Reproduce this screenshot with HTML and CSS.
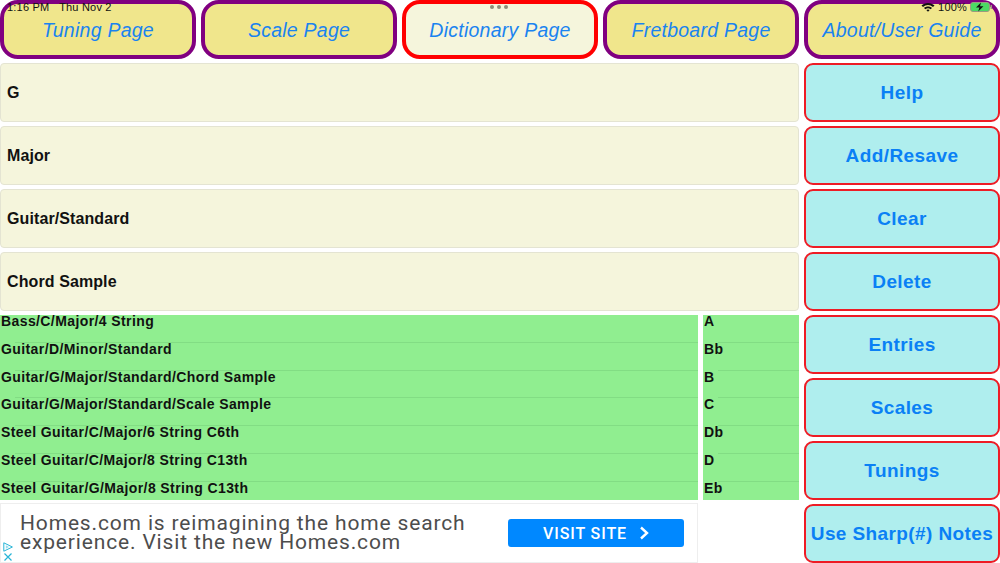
FILE: index.html

```html
<!DOCTYPE html>
<html lang="en">
<head>
    <meta charset="UTF-8">
    <meta name="viewport" content="width=device-width, initial-scale=1.0">
    <title>Dictionary Page</title>
    <link rel="stylesheet" href="styles.css">
</head>
<body>

<div class="page">
    <button class="tab">Tuning Page</button>
    <button class="tab">Scale Page</button>
    <button class="tab tab-active">Dictionary Page</button>
    <button class="tab">Fretboard Page</button>
    <button class="tab">About/User Guide</button>

    <div class="field">G</div>
    <button class="action">Help</button>
    <div class="field">Major</div>
    <button class="action">Add/Resave</button>
    <div class="field">Guitar/Standard</div>
    <button class="action">Clear</button>
    <div class="field">Chord Sample</div>
    <button class="action">Delete</button>

    <div class="lists">
        <ul class="list">
            <li>Bass/C/Major/4 String</li>
            <li>Guitar/D/Minor/Standard</li>
            <li>Guitar/G/Major/Standard/Chord Sample</li>
            <li>Guitar/G/Major/Standard/Scale Sample</li>
            <li>Steel Guitar/C/Major/6 String C6th</li>
            <li>Steel Guitar/C/Major/8 String C13th</li>
            <li>Steel Guitar/G/Major/8 String C13th</li>
        </ul>
        <ul class="list">
            <li>A</li>
            <li>Bb</li>
            <li>B</li>
            <li>C</li>
            <li>Db</li>
            <li>D</li>
            <li>Eb</li>
        </ul>
    </div>
    <button class="action">Entries</button>
    <button class="action">Scales</button>
    <button class="action">Tunings</button>

    <div class="ad">
        <p class="ad-text">Homes.com is reimagining the home search experience. Visit the new Homes.com</p>
        <a class="ad-button">VISIT SITE
            <svg class="ad-chevron" viewBox="0 0 10 14" width="10" height="14"><path d="M2 1.5 L8 7 L2 12.5" fill="none" stroke="#fff" stroke-width="2.4"/></svg>
        </a>
        <div class="ad-marks">
            <svg viewBox="0 0 10 10" width="10" height="10"><path d="M0.8 0.8 L9.4 5 L0.8 9.2 Z" fill="none" stroke="#27b4d6" stroke-width="1"/><path d="M2.8 3.2 L6 5 L2.8 6.8 Z" fill="#9adcec"/></svg>
            <svg viewBox="0 0 10 10" width="10" height="10"><path d="M1.5 1.5 L8.5 8.5 M8.5 1.5 L1.5 8.5" fill="none" stroke="#27b4d6" stroke-width="1.2"/></svg>
        </div>
    </div>
    <button class="action action-last">Use Sharp(#) Notes</button>
</div>

<div class="status">
    <span class="status-time">1:16 PM&nbsp;&nbsp;&nbsp;Thu Nov 2</span>
    <div class="status-dots"><i></i><i></i><i></i></div>
    <div class="status-right">
        <svg viewBox="0 0 14 10" width="14" height="10"><path d="M0.5 3.5 C4 0 10 0 13.5 3.5 L12 5 C9 2.3 5 2.3 2 5 Z M3 6 C5.2 4 8.8 4 11 6 L9.6 7.3 C8 6 6 6 4.4 7.3 Z M5.3 8.1 C6.2 7.4 7.8 7.4 8.7 8.1 L7 9.8 Z" fill="#111"/></svg>
        <span>100%</span>
        <svg viewBox="0 0 23 10" width="23" height="10"><rect x="0.5" y="0.5" width="19" height="9" rx="2.5" fill="#4cd964" stroke="#9a9a80"/><rect x="20.5" y="3" width="1.5" height="4" fill="#9a9a80"/><path d="M11 0.5 L6 5.6 L9.4 5.6 L8.2 9.5 L13.4 4.2 L10 4.2 Z" fill="#111"/></svg>
    </div>
</div>

</body>
</html>
```

FILE: styles.css

```css
* {
    box-sizing: border-box;
}
body {
    margin: 0;
    width: 1000px;
    height: 563px;
    overflow: hidden;
    background: white;
    font-family: "Liberation Sans", Arial, sans-serif;
}
button {
    font-family: inherit;
    padding: 0;
    cursor: pointer;
}
.page {
    display: grid;
    grid-template-columns: repeat(5, 196px);
    grid-template-rows: repeat(9, 59px);
    gap: 4px 5px;
}
.tab {
    padding-top: 1px;
    background-color: #f0e68c;
    border: 4px solid #800080;
    border-radius: 18px;
    color: #1a83f0;
    font-size: 19.5px;
    font-style: italic;
    letter-spacing: 0.25px;
}
.tab-active {
    background-color: #f5f5dc;
    border-color: #ff0000;
}
.field {
    grid-column: span 4;
    display: flex;
    align-items: center;
    padding-left: 6px;
    background-color: #f5f5dc;
    border: 1px solid #e4e4d2;
    border-radius: 4px;
    font-size: 16px;
    font-weight: bold;
    letter-spacing: 0.1px;
    color: #111;
}
.action {
    background-color: #afeeee;
    border: 2px solid #ee1c25;
    border-radius: 9px;
    color: #0a80f5;
    font-size: 19px;
    font-weight: bold;
    letter-spacing: 0.4px;
}
.lists {
    grid-column: span 4;
    grid-row: span 3;
    display: grid;
    grid-template-columns: 698px 96px;
    gap: 5px;
}
.list {
    margin: 0;
    padding: 0;
    list-style: none;
    background-color: #90ee90;
    font-size: 14px;
    font-weight: bold;
    letter-spacing: 0.4px;
    color: #111;
}
.list li {
    height: 27.8px;
    padding-left: 1px;
    line-height: 12px;
    background: linear-gradient(#82dd84, #82dd84) no-repeat 15px 100% / 100% 1px;
}
.list li:last-child {
    height: 18px;
    background: none;
}
.ad {
    grid-column: span 3;
    width: 698px;
    height: 60px;
    margin-top: -1px;
    position: relative;
    display: flex;
    align-items: center;
    gap: 24px;
    padding: 0 13px 0 19px;
    background: white;
    border: 1px solid #eee;
}
.ad-text {
    flex: 1;
    margin: 0;
    font-family: Roboto, sans-serif;
    font-size: 21px;
    line-height: 19px;
    letter-spacing: 0.84px;
    color: #4d4d4d;
}
.ad-button {
    flex: none;
    width: 176px;
    height: 28px;
    display: flex;
    align-items: center;
    justify-content: center;
    gap: 12px;
    background-color: #0088ff;
    border-radius: 3px;
    font-family: Roboto, sans-serif;
    font-size: 16px;
    font-weight: 500;
    letter-spacing: 0.9px;
    color: white;
}
.ad-marks {
    position: absolute;
    left: 2px;
    bottom: 0;
    display: flex;
    flex-direction: column;
}
.action-last {
    grid-column: 5;
}
.status {
    position: absolute;
    top: 0;
    left: 0;
    width: 1000px;
    height: 13px;
    display: flex;
    align-items: center;
    justify-content: space-between;
    padding: 0 7px;
    font-size: 11px;
    letter-spacing: 0.2px;
    color: #111;
}
.status-dots {
    position: absolute;
    left: 490px;
    top: 5px;
    display: flex;
    gap: 3px;
}
.status-dots i {
    width: 4px;
    height: 4px;
    border-radius: 50%;
    background-color: #8c8c78;
}
.status-right {
    display: flex;
    align-items: center;
    gap: 3px;
}
```
